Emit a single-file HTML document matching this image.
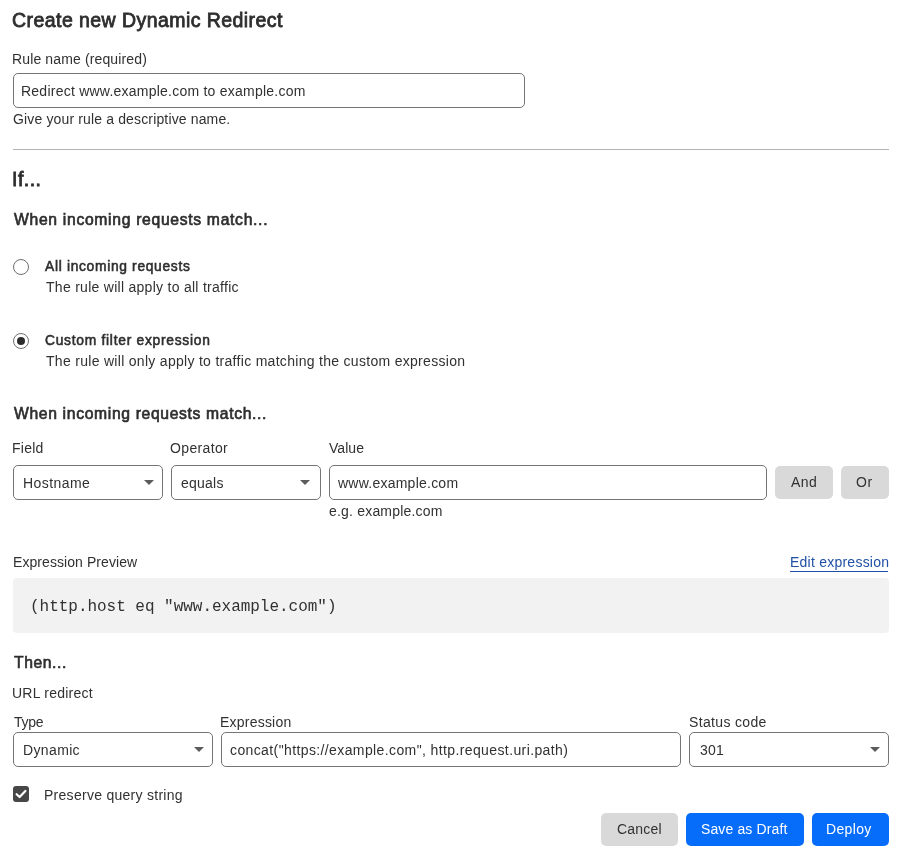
<!DOCTYPE html>
<html><head><meta charset="utf-8">
<style>
*{box-sizing:border-box;margin:0;padding:0}
html,body{width:907px;height:859px;background:#fff;overflow:hidden}
body{font-family:"Liberation Sans",sans-serif;color:#313131;position:relative}
.tx{position:absolute;white-space:nowrap;line-height:20px;height:20px;will-change:transform}
.bx{position:absolute;border:1px solid #757575;border-radius:5px;background:#fff}
.bt{position:absolute;border-radius:5px}
.gy{background:#d9d9d9}
.bl{background:#066dfb}
.car{position:absolute;width:0;height:0;border-left:5px solid transparent;border-right:5px solid transparent;border-top:5px solid #5c5c5c}
.rad{position:absolute;width:16px;height:16px;border:1px solid #6e6e6e;border-radius:50%;background:#fff}
.dot{position:absolute;left:3px;top:3px;width:8px;height:8px;border-radius:50%;background:#2b2b2b}

</style></head><body>
<div class="bx" style="left:13px;top:73px;width:512px;height:35px"></div>
<div style="position:absolute;left:13px;top:149px;width:876px;height:1px;background:#b3b3b3"></div>
<div class="rad" style="left:13px;top:259px"></div>
<div class="rad" style="left:13px;top:333px"><div class="dot"></div></div>
<div class="bx" style="left:13px;top:465px;width:150px;height:35px"></div>
<div class="car" style="left:144px;top:480px"></div>
<div class="bx" style="left:171px;top:465px;width:150px;height:35px"></div>
<div class="car" style="left:300px;top:480px"></div>
<div class="bx" style="left:329px;top:465px;width:438px;height:35px"></div>
<div class="bt gy" style="left:775px;top:466px;width:58px;height:33px"></div>
<div class="bt gy" style="left:841px;top:466px;width:48px;height:33px"></div>
<div style="position:absolute;left:790px;top:571px;width:98px;height:1px;background:#1f4fa6"></div>
<div style="position:absolute;left:13px;top:578px;width:876px;height:55px;background:#f2f2f2;border-radius:4px"></div>
<div class="bx" style="left:13px;top:732px;width:200px;height:35px"></div>
<div class="car" style="left:194px;top:747px"></div>
<div class="bx" style="left:221px;top:732px;width:460px;height:35px"></div>
<div class="bx" style="left:689px;top:732px;width:200px;height:35px"></div>
<div class="car" style="left:870px;top:747px"></div>
<div style="position:absolute;left:13px;top:786px;width:16px;height:16px;border-radius:3px;background:#474747"><svg width="16" height="16" viewBox="0 0 16 16" style="position:absolute;left:0;top:0"><path d="M3.6 8.2 L6.6 11 L12.4 5" fill="none" stroke="#fff" stroke-width="2.2" stroke-linecap="round" stroke-linejoin="round"/></svg></div>
<div class="bt gy" style="left:601px;top:813px;width:77px;height:33px"></div>
<div class="bt bl" style="left:686px;top:813px;width:118px;height:33px"></div>
<div class="bt bl" style="left:812px;top:813px;width:77px;height:33px"></div>

<div class="tx" id="t0" style="left:12.38px;top:10.00px;font-size:19.5px;font-weight:400;-webkit-text-stroke:0.8px #2e2e2e;font-family:'Liberation Sans',sans-serif;color:#2e2e2e;letter-spacing:0.439px">Create new Dynamic Redirect</div>
<div class="tx" id="t1" style="left:12.12px;top:49.00px;font-size:14px;font-weight:400;font-family:'Liberation Sans',sans-serif;color:#313131;letter-spacing:0.132px">Rule name (required)</div>
<div class="tx" id="t2" style="left:21.26px;top:81.00px;font-size:14px;font-weight:400;font-family:'Liberation Sans',sans-serif;color:#313131;letter-spacing:0.235px">Redirect www.example.com to example.com</div>
<div class="tx" id="t3" style="left:12.93px;top:109.00px;font-size:14px;font-weight:400;font-family:'Liberation Sans',sans-serif;color:#313131;letter-spacing:0.146px">Give your rule a descriptive name.</div>
<div class="tx" id="t4" style="left:12.18px;top:169.00px;font-size:19.5px;font-weight:400;-webkit-text-stroke:0.8px #2e2e2e;font-family:'Liberation Sans',sans-serif;color:#2e2e2e;letter-spacing:0.483px">If...</div>
<div class="tx" id="t5" style="left:13.57px;top:210.00px;font-size:15.7px;font-weight:400;-webkit-text-stroke:0.65px #2e2e2e;font-family:'Liberation Sans',sans-serif;color:#2e2e2e;letter-spacing:0.690px">When incoming requests match...</div>
<div class="tx" id="t6" style="left:44.62px;top:257.00px;font-size:13.8px;font-weight:400;-webkit-text-stroke:0.55px #2e2e2e;font-family:'Liberation Sans',sans-serif;color:#2e2e2e;letter-spacing:0.685px">All incoming requests</div>
<div class="tx" id="t7" style="left:45.52px;top:277.00px;font-size:14px;font-weight:400;font-family:'Liberation Sans',sans-serif;color:#313131;letter-spacing:0.279px">The rule will apply to all traffic</div>
<div class="tx" id="t8" style="left:44.88px;top:331.00px;font-size:13.8px;font-weight:400;-webkit-text-stroke:0.55px #2e2e2e;font-family:'Liberation Sans',sans-serif;color:#2e2e2e;letter-spacing:0.734px">Custom filter expression</div>
<div class="tx" id="t9" style="left:45.62px;top:351.00px;font-size:14px;font-weight:400;font-family:'Liberation Sans',sans-serif;color:#313131;letter-spacing:0.297px">The rule will only apply to traffic matching the custom expression</div>
<div class="tx" id="t10" style="left:13.58px;top:404.00px;font-size:15.7px;font-weight:400;-webkit-text-stroke:0.65px #2e2e2e;font-family:'Liberation Sans',sans-serif;color:#2e2e2e;letter-spacing:0.656px">When incoming requests match...</div>
<div class="tx" id="t11" style="left:11.86px;top:438.00px;font-size:14px;font-weight:400;font-family:'Liberation Sans',sans-serif;color:#313131;letter-spacing:0.264px">Field</div>
<div class="tx" id="t12" style="left:170.16px;top:438.00px;font-size:14px;font-weight:400;font-family:'Liberation Sans',sans-serif;color:#313131;letter-spacing:0.352px">Operator</div>
<div class="tx" id="t13" style="left:329.27px;top:438.00px;font-size:14px;font-weight:400;font-family:'Liberation Sans',sans-serif;color:#313131;letter-spacing:0.043px">Value</div>
<div class="tx" id="t14" style="left:23.12px;top:473.00px;font-size:14px;font-weight:400;font-family:'Liberation Sans',sans-serif;color:#313131;letter-spacing:0.435px">Hostname</div>
<div class="tx" id="t15" style="left:181.45px;top:473.00px;font-size:14px;font-weight:400;font-family:'Liberation Sans',sans-serif;color:#313131;letter-spacing:0.237px">equals</div>
<div class="tx" id="t16" style="left:338.13px;top:473.00px;font-size:14px;font-weight:400;font-family:'Liberation Sans',sans-serif;color:#313131;letter-spacing:0.240px">www.example.com</div>
<div class="tx" id="t17" style="left:791.43px;top:472.00px;font-size:14px;font-weight:400;font-family:'Liberation Sans',sans-serif;color:#313131;letter-spacing:0.498px">And</div>
<div class="tx" id="t18" style="left:856.20px;top:472.00px;font-size:14px;font-weight:400;font-family:'Liberation Sans',sans-serif;color:#313131;letter-spacing:0.609px">Or</div>
<div class="tx" id="t19" style="left:328.97px;top:501.00px;font-size:14px;font-weight:400;font-family:'Liberation Sans',sans-serif;color:#313131;letter-spacing:0.194px">e.g. example.com</div>
<div class="tx" id="t20" style="left:12.76px;top:552.00px;font-size:14px;font-weight:400;font-family:'Liberation Sans',sans-serif;color:#313131;letter-spacing:0.069px">Expression Preview</div>
<div class="tx" id="t21" style="left:790.02px;top:552.00px;font-size:14px;font-weight:400;font-family:'Liberation Sans',sans-serif;color:#1f4fa6;letter-spacing:0.236px">Edit expression</div>
<div class="tx" id="t22" style="left:29.59px;top:597.00px;font-size:16px;font-weight:400;font-family:'Liberation Mono',monospace;color:#313131;letter-spacing:-0.024px">(http.host eq &quot;www.example.com&quot;)</div>
<div class="tx" id="t23" style="left:13.60px;top:653.00px;font-size:15.7px;font-weight:400;-webkit-text-stroke:0.65px #2e2e2e;font-family:'Liberation Sans',sans-serif;color:#2e2e2e;letter-spacing:0.569px">Then...</div>
<div class="tx" id="t24" style="left:12.12px;top:683.00px;font-size:14px;font-weight:400;font-family:'Liberation Sans',sans-serif;color:#313131;letter-spacing:0.226px">URL redirect</div>
<div class="tx" id="t25" style="left:14.18px;top:712.00px;font-size:14px;font-weight:400;font-family:'Liberation Sans',sans-serif;color:#313131;letter-spacing:-0.250px">Type</div>
<div class="tx" id="t26" style="left:219.66px;top:712.00px;font-size:14px;font-weight:400;font-family:'Liberation Sans',sans-serif;color:#313131;letter-spacing:0.219px">Expression</div>
<div class="tx" id="t27" style="left:688.54px;top:712.00px;font-size:14px;font-weight:400;font-family:'Liberation Sans',sans-serif;color:#313131;letter-spacing:0.346px">Status code</div>
<div class="tx" id="t28" style="left:23.28px;top:740.00px;font-size:14px;font-weight:400;font-family:'Liberation Sans',sans-serif;color:#313131;letter-spacing:0.361px">Dynamic</div>
<div class="tx" id="t29" style="left:229.55px;top:740.00px;font-size:14px;font-weight:400;font-family:'Liberation Sans',sans-serif;color:#313131;letter-spacing:0.388px">concat(&quot;https://example.com&quot;, http.request.uri.path)</div>
<div class="tx" id="t30" style="left:699.75px;top:740.00px;font-size:14px;font-weight:400;font-family:'Liberation Sans',sans-serif;color:#313131;letter-spacing:0.202px">301</div>
<div class="tx" id="t31" style="left:44.46px;top:785.00px;font-size:14px;font-weight:400;font-family:'Liberation Sans',sans-serif;color:#313131;letter-spacing:0.277px">Preserve query string</div>
<div class="tx" id="t32" style="left:617.49px;top:819.00px;font-size:14px;font-weight:400;font-family:'Liberation Sans',sans-serif;color:#313131;letter-spacing:0.218px">Cancel</div>
<div class="tx" id="t33" style="left:700.78px;top:819.00px;font-size:14px;font-weight:400;font-family:'Liberation Sans',sans-serif;color:#fff;letter-spacing:0.122px">Save as Draft</div>
<div class="tx" id="t34" style="left:826.44px;top:819.00px;font-size:14px;font-weight:400;font-family:'Liberation Sans',sans-serif;color:#fff;letter-spacing:0.341px">Deploy</div>
</body></html>
